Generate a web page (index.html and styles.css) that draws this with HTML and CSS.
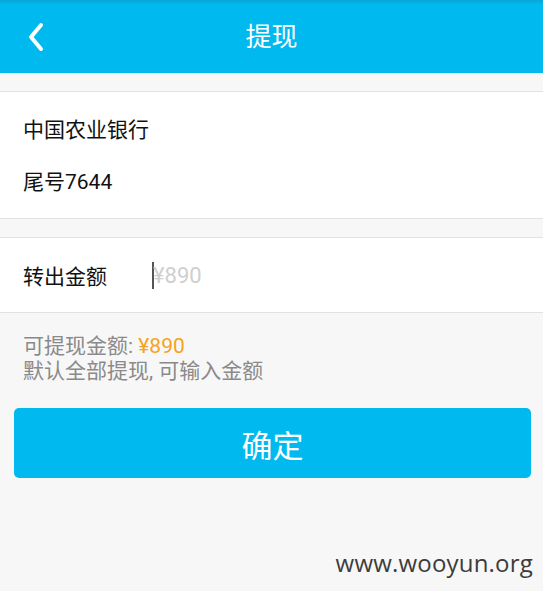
FILE: index.html
```html
<!DOCTYPE html>
<html lang="zh-CN">
<head>
<meta charset="utf-8">
<title>提现</title>
<link rel="stylesheet" href="styles.css">
</head>
<body>
<div class="page">
  <header class="topbar">
    <svg class="back" width="20" height="30" viewBox="0 0 20 30" aria-hidden="true">
      <path d="M15 3 L5 15 L15 27" fill="none" stroke="#fff" stroke-width="4" stroke-linecap="round" stroke-linejoin="round"/>
    </svg>
    <h1 class="title">提现</h1>
  </header>

  <section class="card bank">
    <div class="row">中国农业银行</div>
    <div class="row">尾号7644</div>
  </section>

  <section class="card amount">
    <span class="label">转出金额</span>
    <span class="input"><span class="caret"></span><span class="placeholder">¥890</span></span>
  </section>

  <div class="hint">
    <div>可提现金额: <span class="money">¥890</span></div>
    <div>默认全部提现, 可输入金额</div>
  </div>

  <button class="confirm">确定</button>

  <div class="watermark">www.wooyun.org</div>
</div>
</body>
</html>
```

FILE: styles.css
```css
* { box-sizing: border-box; }
html, body { margin: 0; padding: 0; }
body {
  background: #f7f7f7;
  font-family: Roboto, "Noto Sans CJK SC", sans-serif;
  color: #111;
}
.page {
  position: relative;
  width: 543px;
  height: 591px;
  display: flex;
  flex-direction: column;
}
.topbar {
  height: 73px;
  background: linear-gradient(#0aa3d6 0, #00b5ea 3px, #00baef 5px, #00baef 100%);
  display: flex;
  align-items: center;
  justify-content: center;
  position: relative;
}
.back {
  position: absolute;
  left: 26px;
  top: 22px;
}
.title {
  margin: 0;
  color: #fff;
  font-size: 26px;
  font-weight: normal;
  line-height: 1;
}
.card {
  background: #fff;
  border-top: 1px solid #e2e2e2;
  border-bottom: 1px solid #e2e2e2;
}
.bank {
  margin-top: 18px;
  padding: 12px 0 10px 23px;
}
.bank .row {
  height: 52px;
  line-height: 52px;
  font-size: 21px;
}
.amount {
  margin-top: 18px;
  height: 76px;
  display: flex;
  align-items: center;
  padding-left: 23px;
  font-size: 21px;
}
.label { width: 129px; }
.input {
  display: flex;
  align-items: center;
  color: #cfcfcf;
  font-size: 22px;
}
.caret {
  width: 2px;
  height: 27px;
  background: #555;
  margin-right: -1px;
}
.hint {
  padding: 21px 0 0 23px;
  color: #8a8a8a;
  font-size: 21px;
  line-height: 25px;
}
.money { color: #f5a31f; }
.confirm {
  margin: 24px 12px 0 14px;
  height: 70px;
  border: 0;
  border-radius: 5px;
  background: #00baef;
  color: #fff;
  font-family: inherit;
  font-size: 31px;
  padding: 0;
}
.watermark {
  position: absolute;
  right: 10px;
  top: 546px;
  font-family: "Open Sans", "DejaVu Sans", sans-serif;
  font-size: 24px;
  color: #3c3c3c;
  letter-spacing: 0.2px;
}
```
